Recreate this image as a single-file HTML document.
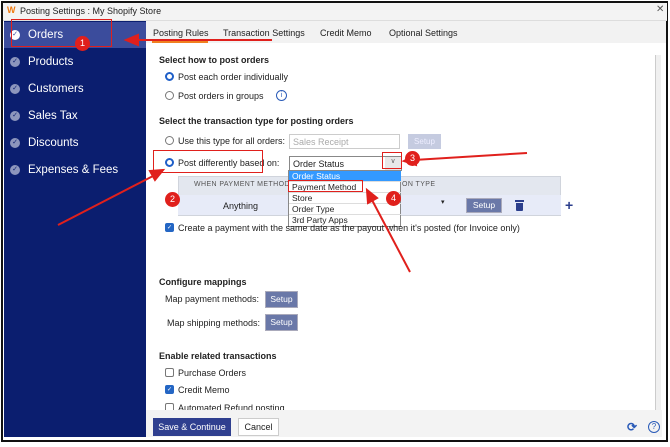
<!DOCTYPE html>
<html><head><meta charset="utf-8"><style>
*{margin:0;padding:0;box-sizing:border-box}
body{width:670px;height:447px;background:#fff;font-family:"Liberation Sans",Tahoma,sans-serif;position:relative;overflow:hidden;font-size:9px;color:#222}
.a{position:absolute;white-space:nowrap}
.win{position:absolute;left:1px;top:1px;width:667px;height:441px;border:2px solid #111}
.side{position:absolute;left:4px;top:21px;width:142px;height:416px;background:#0b1e6f}
.si{position:absolute;left:0;width:142px;height:26px;color:#fff;font-size:11.5px;line-height:26px;padding-left:24px}
.ck{position:absolute;left:6px;top:8px;width:10px;height:10px;border-radius:50%;background:#8d96bd;color:#0b1e6f;font-size:7px;line-height:10px;text-align:center}
.b{font-weight:bold}
.rad{position:absolute;width:9px;height:9px;border:1px solid #777;border-radius:50%;background:#fff}
.rad.on{border:2.5px solid #1f5fc8}
.cb{position:absolute;width:9px;height:9px;border:1px solid #777;border-radius:2px;background:#fff}
.cb.on{background:#2466c4;border-color:#2466c4;color:#fff;font-size:6px;line-height:8px;text-align:center}
.btn{position:absolute;background:#6a78a8;color:#fff;font-size:8.5px;text-align:center;border:1px solid #aab}
.red{position:absolute;border:1.5px solid #e0201c;z-index:5}
.bad{position:absolute;width:15px;height:15px;border-radius:50%;background:#e0201c;color:#fff;font-size:9px;text-align:center;line-height:15px;z-index:6}
.dd{position:absolute;left:0;width:112px;height:11px;font-size:8.5px;padding-left:3px;line-height:11px;border-bottom:1px solid #ddd}
</style></head><body>
<div class="win"></div>
<div class="a" style="left:3px;top:3px;width:664px;height:18px;background:#f3f3f3;border-bottom:1px solid #ddd"></div>
<div class="a" style="left:7px;top:5px;color:#f07a10;font-weight:bold;font-size:9px">W</div>
<div class="a" style="left:20px;top:6px;font-size:9px">Posting Settings : My Shopify Store</div>
<div class="a" style="left:656px;top:4px;font-size:10px;color:#555">✕</div>

<div class="side">
<div class="si" style="top:1px;background:#3b4c9c"><span class="ck" style="background:#fff;color:#3b4c9c">✓</span>Orders</div>
<div class="si" style="top:28px"><span class="ck">✓</span>Products</div>
<div class="si" style="top:55px"><span class="ck">✓</span>Customers</div>
<div class="si" style="top:82px"><span class="ck">✓</span>Sales Tax</div>
<div class="si" style="top:109px"><span class="ck">✓</span>Discounts</div>
<div class="si" style="top:136px"><span class="ck">✓</span>Expenses &amp; Fees</div>
</div>

<div class="a" style="left:146px;top:21px;width:520px;height:22px;background:#f2f2f2"></div>
<div class="a" style="left:153px;top:28px">Posting Rules</div>
<div class="a" style="left:152px;top:41px;width:56px;height:2px;background:#f08020"></div>
<div class="a" style="left:223px;top:28px">Transaction Settings</div>
<div class="a" style="left:320px;top:28px">Credit Memo</div>
<div class="a" style="left:389px;top:28px">Optional Settings</div>
<div class="a" style="left:655px;top:55px;width:6px;height:355px;background:#f0f0f0;border-left:1px solid #ccc"></div>

<div class="a b" style="left:159px;top:55px">Select how to post orders</div>
<div class="rad on" style="left:165px;top:72px"></div><div class="a" style="left:178px;top:72px">Post each order individually</div>
<div class="rad" style="left:165px;top:91px"></div><div class="a" style="left:178px;top:91px">Post orders in groups</div>
<div class="a" style="left:276px;top:90px;width:11px;height:11px;border:1px solid #2a5bb8;border-radius:50%;color:#2a5bb8;font-size:7px;text-align:center;line-height:9px">i</div>

<div class="a b" style="left:159px;top:116px">Select the transaction type for posting orders</div>
<div class="rad" style="left:165px;top:136px"></div><div class="a" style="left:178px;top:136px">Use this type for all orders:</div>
<div class="a" style="left:289px;top:134px;width:111px;height:15px;border:1px solid #ccc;color:#aaa;padding:2px 3px">Sales Receipt</div>
<div class="a" style="left:408px;top:134px;width:33px;height:15px;background:#c5cbe0;color:#eef;text-align:center;line-height:15px;font-size:8px">Setup</div>
<div class="rad on" style="left:165px;top:158px"></div><div class="a" style="left:178px;top:158px">Post differently based on:</div>
<div class="a" style="left:289px;top:156px;width:113px;height:15px;border:1px solid #888;padding:2px 3px;background:#fff">Order Status</div>
<div class="a" style="left:385px;top:157px;width:16px;height:13px;background:#e8e8e8;color:#666;font-size:7px;text-align:center">∨</div>

<div class="a" style="left:178px;top:176px;width:383px;height:40px;background:#e3e7ef;border:1px solid #d0d4dc"></div>
<div class="a" style="left:178px;top:195px;width:383px;height:20px;background:#e7ebf8"></div>
<div class="a" style="left:194px;top:181px;font-size:7px;color:#555;letter-spacing:.4px">WHEN PAYMENT METHOD</div>
<div class="a" style="left:395px;top:181px;font-size:7px;color:#555;letter-spacing:.4px">TION TYPE</div>
<div class="a" style="left:223px;top:201px">Anything</div>
<div class="a" style="left:441px;top:198px;font-size:7px">▾</div>
<div class="btn" style="left:466px;top:198px;width:36px;height:15px;line-height:13px">Setup</div>
<div class="a" style="left:515px;top:200px;width:9px;height:2px;background:#2b3e8c"></div>
<div class="a" style="left:516px;top:203px;width:7px;height:8px;background:#2b3e8c;border-radius:0 0 1px 1px"></div>
<div class="a" style="left:565px;top:197px;color:#2b3e8c;font-size:14px;font-weight:bold">+</div>

<div class="a" style="left:288px;top:170px;width:113px;height:57px;background:#fff;border:1px solid #888">
<div class="dd" style="top:0;background:#3399ff;color:#fff">Order Status</div>
<div class="dd" style="top:11px">Payment Method</div>
<div class="dd" style="top:22px">Store</div>
<div class="dd" style="top:33px">Order Type</div>
<div class="dd" style="top:44px;border:0">3rd Party Apps</div>
</div>

<div class="cb on" style="left:165px;top:223px">✓</div>
<div class="a" style="left:178px;top:223px">Create a payment with the same date as the payout when it's posted (for Invoice only)</div>

<div class="a b" style="left:159px;top:277px">Configure mappings</div>
<div class="a" style="left:165px;top:294px">Map payment methods:</div>
<div class="btn" style="left:265px;top:291px;width:33px;height:17px;line-height:15px">Setup</div>
<div class="a" style="left:167px;top:318px">Map shipping methods:</div>
<div class="btn" style="left:265px;top:314px;width:33px;height:17px;line-height:15px">Setup</div>

<div class="a b" style="left:159px;top:351px">Enable related transactions</div>
<div class="cb" style="left:165px;top:368px"></div><div class="a" style="left:178px;top:368px">Purchase Orders</div>
<div class="cb on" style="left:165px;top:385px">✓</div><div class="a" style="left:178px;top:385px">Credit Memo</div>
<div class="cb" style="left:165px;top:403px"></div><div class="a" style="left:178px;top:403px">Automated Refund posting</div>

<div class="a" style="left:146px;top:410px;width:516px;height:27px;background:#f3f3f3"></div>
<div class="a" style="left:153px;top:418px;width:78px;height:18px;background:#2f3f8f;color:#fff;text-align:center;line-height:18px">Save &amp; Continue</div>
<div class="a" style="left:238px;top:418px;width:41px;height:18px;background:#fff;border:1px solid #ccc;text-align:center;line-height:16px">Cancel</div>
<div class="a" style="left:627px;top:420px;color:#2a5bb8;font-size:12px;font-weight:bold">⟳</div>
<div class="a" style="left:648px;top:421px;width:12px;height:12px;border:1.5px solid #2a5bb8;border-radius:50%;color:#2a5bb8;font-size:8px;text-align:center;line-height:10px">?</div>

<div class="red" style="left:11px;top:19px;width:101px;height:28px"></div>
<div class="red" style="left:153px;top:150px;width:110px;height:23px"></div>
<div class="red" style="left:382px;top:152px;width:20px;height:17px"></div>
<div class="red" style="left:288px;top:180px;width:75px;height:12px"></div>
<svg class="a" style="left:0;top:0;z-index:5" width="670" height="447">
<g stroke="#e0201c" stroke-width="2" fill="#e0201c">
<line x1="272" y1="40" x2="135" y2="40"/><polygon points="126,40 138,35 138,45"/>
<line x1="58" y1="225" x2="155" y2="175"/><polygon points="163,170 150,171 155,180"/>
<line x1="527" y1="153" x2="414" y2="160"/><polygon points="404,161 415,155 416,165"/>
<line x1="410" y1="272" x2="372" y2="200"/><polygon points="367,190 368,203 377,198"/>
</g></svg>
<div class="bad" style="left:75px;top:36px">1</div>
<div class="bad" style="left:165px;top:192px">2</div>
<div class="bad" style="left:405px;top:151px">3</div>
<div class="bad" style="left:386px;top:191px">4</div>
</body></html>
